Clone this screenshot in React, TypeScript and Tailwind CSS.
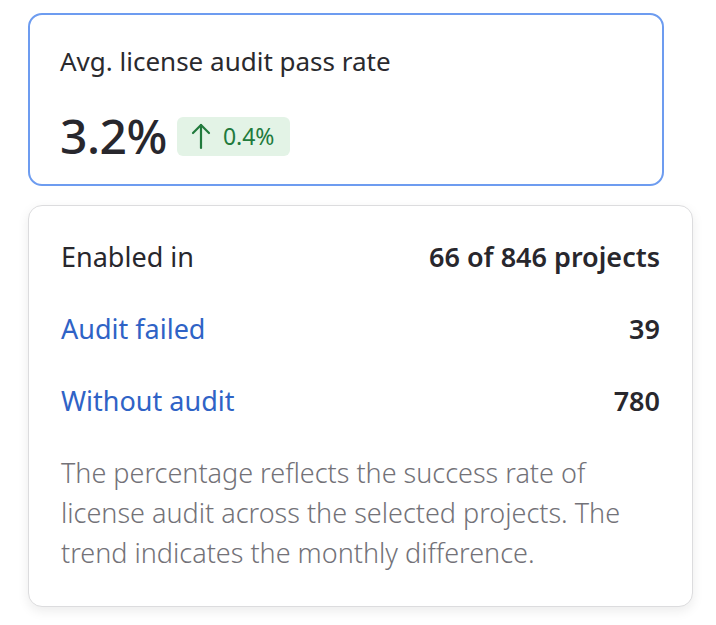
const rows = [
  { label: "Enabled in", value: "66 of 846 projects", link: false },
  { label: "Audit failed", value: "39", link: true },
  { label: "Without audit", value: "780", link: true },
];

const TrendUp = () => (
  <svg width="20" height="28" viewBox="0 0 20 28" fill="none" stroke="currentColor" strokeWidth="2.2" strokeLinecap="round" strokeLinejoin="round">
    <path d="M10 3v23" />
    <path d="M2 11l8-8 8 8" />
  </svg>
);

const StatCard = () => (
  <div className="w-[636px] h-[173px] rounded-[14px] border-2 border-[#6d9cf0] bg-white px-[30px] pt-[30px]">
    <div className="text-[26px] leading-[32px] text-[#2a2a2e]">Avg. license audit pass rate</div>
    <div className="mt-[33px] flex items-center gap-[10px]">
      <span className="text-[48px] leading-[52px] font-medium tracking-[-0.5px] text-[#28272d]">3.2%</span>
      <span className="flex h-[39px] items-center gap-[12px] rounded-[6px] bg-[#e3f3e6] pl-[14px] pr-[16px] text-[23px] text-[#217a3c]">
        <TrendUp />
        0.4%
      </span>
    </div>
  </div>
);

const DetailsCard = () => (
  <div className="w-[665px] rounded-[14px] border border-[#dcdcde] bg-white px-[32px] pt-[31px] pb-[33px] shadow-[0_4px_12px_rgba(0,0,0,0.08)]">
    <div className="flex flex-col gap-[32px]">
      {rows.map((row) => (
        <div key={row.label} className="flex items-center justify-between text-[27px] leading-[40px]">
          <span className={row.link ? "text-[#2f63c6]" : "text-[#28272d]"}>{row.label}</span>
          <span className="font-semibold text-[#28272d]">{row.value}</span>
        </div>
      ))}
    </div>
    <p className="mt-[32px] text-[27px] leading-[40px] font-light text-[#737278]">
      The percentage reflects the success rate of license audit across the selected projects. The
      trend indicates the monthly difference.
    </p>
  </div>
);

export default function App() {
  return (
    <div
      className="min-h-[625px] bg-white pl-[28px] pt-[13px]"
      style={{ fontFamily: '"Noto Sans", "Open Sans", sans-serif' }}
    >
      <StatCard />
      <div className="mt-[19px]">
        <DetailsCard />
      </div>
    </div>
  );
}
